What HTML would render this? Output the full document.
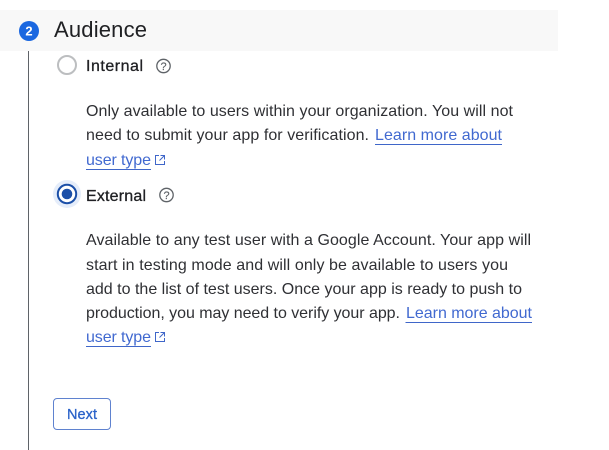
<!DOCTYPE html>
<html><head><meta charset="utf-8"><style>
html,body{margin:0;padding:0;background:#fff;width:609px;height:450px;overflow:hidden}
svg{display:block}
text{font-family:"Liberation Sans",sans-serif}
.b{font-size:16px;fill:#2f3034}
.l{font-size:16px;fill:#4169d0}
.m{font-size:16px;fill:#202124;stroke:#202124;stroke-width:.3}
.u{stroke:#3f66c9;stroke-width:1;fill:none}
.q{fill:none;stroke:#5f6368;stroke-width:1.3}
.qm{font-size:11px;fill:#5f6368;stroke:#5f6368;stroke-width:.15}
</style></head><body>
<svg width="609" height="450" viewBox="0 0 609 450" xmlns="http://www.w3.org/2000/svg">
<rect x="0" y="10" width="558" height="41" fill="#f8f8f8"/>
<rect x="28" y="51" width="1" height="399" fill="#5f6368"/>
<circle cx="29" cy="31" r="10" fill="#1a67e0"/>
<text x="29" y="35.500" font-size="13" font-weight="bold" fill="#fff" text-anchor="middle">2</text>
<text x="54" y="37" font-size="22" fill="#202124" textLength="93" lengthAdjust="spacing">Audience</text>

<circle cx="67" cy="65" r="9" fill="none" stroke="#bcbec0" stroke-width="2"/>
<text x="86" y="71" class="m" textLength="57" lengthAdjust="spacing">Internal</text>
<circle cx="163.500" cy="66" r="6.700" class="q"/>
<text x="163.500" y="70" class="qm" text-anchor="middle">?</text>

<text x="86" y="116" class="b" textLength="427" lengthAdjust="spacing">Only available to users within your organization. You will not</text>
<text x="86" y="140" class="b" textLength="283" lengthAdjust="spacing">need to submit your app for verification.</text>
<text x="375" y="140" class="l" textLength="127" lengthAdjust="spacing">Learn more about</text>
<path class="u" d="M375 144.500H502"/>
<text x="86" y="165" class="l" textLength="65" lengthAdjust="spacing">user type</text>
<path class="u" d="M86 169.500H151"/>
<path class="u" d="M159 155.500H155.500V164.500H164.500V161M160.500 155.500H164.500V159.500M164.500 155.500L159.500 160.500"/>

<circle cx="67" cy="194" r="14" fill="#e5edfa"/>
<circle cx="67" cy="194" r="9.200" fill="#fff" stroke="#1b4fa8" stroke-width="2"/>
<circle cx="67" cy="194" r="5.300" fill="#1b4fa8"/>
<text x="86" y="201" class="m" textLength="60" lengthAdjust="spacing">External</text>
<circle cx="166.500" cy="195" r="6.700" class="q"/>
<text x="166.500" y="199" class="qm" text-anchor="middle">?</text>

<text x="86" y="245" class="b" textLength="445" lengthAdjust="spacing">Available to any test user with a Google Account. Your app will</text>
<text x="86" y="270" class="b" textLength="422" lengthAdjust="spacing">start in testing mode and will only be available to users you</text>
<text x="86" y="294" class="b" textLength="436" lengthAdjust="spacing">add to the list of test users. Once your app is ready to push to</text>
<text x="86" y="318" class="b" textLength="314" lengthAdjust="spacing">production, you may need to verify your app.</text>
<text x="406" y="318" class="l" textLength="126" lengthAdjust="spacing">Learn more about</text>
<path class="u" d="M405.500 322.500H532"/>
<text x="86" y="342" class="l" textLength="65" lengthAdjust="spacing">user type</text>
<path class="u" d="M86 346.500H151"/>
<path class="u" d="M159 332.500H155.500V341.500H164.500V338M160.500 332.500H164.500V336.500M164.500 332.500L159.500 337.500"/>

<rect x="53.500" y="398.500" width="57" height="31" rx="3.500" fill="#fff" stroke="#5f82cf"/>
<text x="67" y="419" font-size="14.500" fill="#2a62c9" stroke="#2a62c9" stroke-width=".3" textLength="30" lengthAdjust="spacing">Next</text>
</svg>
</body></html>
